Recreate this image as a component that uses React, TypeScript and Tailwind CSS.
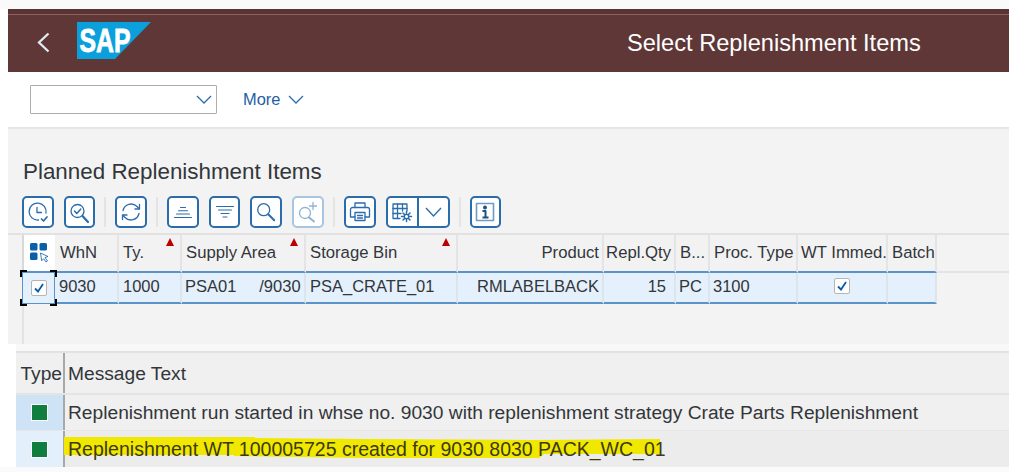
import React from "react";

const B = "#2b6cab";

function Svg({ children, size = 24, color = B }: { children: React.ReactNode; size?: number; color?: string }) {
  return (
    <svg width={size} height={size} viewBox="0 0 24 24" fill="none" stroke={color} strokeWidth={1.3} strokeLinecap="round" strokeLinejoin="round">
      {children}
    </svg>
  );
}

const ClockCheck = () => (
  <Svg>
    <path d="M20 13A8.5 8.5 0 1 0 12.5 20" />
    <path d="M11 7.5v5h4.5" />
    <path d="M15.5 19l2 2 3.5-4" strokeWidth={1.7} />
  </Svg>
);
const SearchCheck = () => (
  <Svg>
    <circle cx="9.5" cy="11" r="6.5" />
    <path d="M14.5 16l5.5 6" strokeWidth={2.2} />
    <path d="M6.5 11l2.3 2.5 4-4.5" strokeWidth={1.5} />
  </Svg>
);
const Refresh = () => (
  <Svg>
    <path d="M4 10.5A8.3 8.3 0 0 1 18 6.5L20 8.5" />
    <path d="M20.5 4.5V9H16" />
    <path d="M20 13.5A8.3 8.3 0 0 1 6 17.5L4 15.5" />
    <path d="M3.5 19.5V15H8" />
  </Svg>
);
const SortAsc = () => (
  <Svg>
    <path d="M9.5 7.5h5M7.5 10.8h9M5.5 14h13M3.5 17.5h17" strokeWidth={1.1} />
  </Svg>
);
const SortDesc = () => (
  <Svg>
    <path d="M3.5 6.5h17M5.5 10h13M8 13.5h8M10 17h4" strokeWidth={1.1} />
  </Svg>
);
const Search = () => (
  <Svg>
    <circle cx="9.7" cy="9.7" r="6" />
    <path d="M14.2 14.2l6 6" strokeWidth={2} />
  </Svg>
);
const SearchPlus = () => (
  <Svg color="#8fb3d4">
    <circle cx="9" cy="13" r="5.5" />
    <path d="M13 17.5l5 4" strokeWidth={2} />
    <path d="M17 2.5v7M13.5 6h7" />
  </Svg>
);
const Printer = () => (
  <Svg>
    <path d="M7 7.5V3h10v4.5" />
    <path d="M7 17H2.5V9.5a2 2 0 0 1 2-2h15a2 2 0 0 1 2 2V17H17" />
    <path d="M7 12.5h10V20.5H7z" />
    <path d="M9.5 15.5h5M9.5 18h5" />
  </Svg>
);
const TableGear = () => (
  <Svg>
    <path d="M10 18.5H3V4h14v7" />
    <path d="M3 8.5h14M3 13.5h8M7.5 4v14.5M12.5 4v7" />
    <circle cx="16.5" cy="16.5" r="2.2" />
    <path d="M16.5 11.5v2M16.5 19.5v2M11.5 16.5h2M19.5 16.5h2M13 13l1.4 1.4M18.6 18.6l1.4 1.4M13 20l1.4-1.4M18.6 14.4l1.4-1.4" strokeWidth={1.5} />
  </Svg>
);
const Info = () => (
  <Svg>
    <rect x="3.5" y="3.5" width="17" height="17" strokeWidth={1.6} stroke="#6d9cc9" />
    <circle cx="12" cy="7.5" r="1.3" fill="#1c4f83" stroke="#1c4f83" />
    <path d="M9.5 11H12.5V17M9.5 17.5h6" strokeWidth={2} strokeLinecap="butt" stroke="#1c4f83" />
  </Svg>
);

function Chevron({ w = 14, h = 7 }: { w?: number; h?: number }) {
  return (
    <svg width={w + 2} height={h + 2} viewBox={`0 0 ${w + 2} ${h + 2}`} fill="none" stroke="#2b6cab" strokeWidth="1.3">
      <path d={`M1 1L${w / 2 + 1} ${h + 1}L${w + 1} 1`} />
    </svg>
  );
}

function Btn({ children, disabled }: { children: React.ReactNode; disabled?: boolean }) {
  return (
    <div className={`flex h-[32px] w-[31.7px] shrink-0 items-center justify-center rounded-[5px] border-2 bg-white ${disabled ? "border-[#a9c5df]" : "border-[#2b6cab]"}`}>
      {children}
    </div>
  );
}
const Sep = () => <div className="mx-[9px] h-[30px] w-[2px] shrink-0 bg-[#e4e4e4]" />;

const Tri = () => (
  <div className="absolute right-[6px] top-[3px] h-0 w-0 border-x-[4.5px] border-b-[8px] border-x-transparent border-b-[#bb0000]" />
);

function Check() {
  return (
    <div className="flex h-[16px] w-[16px] items-center justify-center rounded-[2px] border border-[#b5b5b5] bg-white">
      <svg width="12" height="12" viewBox="0 0 12 12" fill="none" stroke="#0a5cab" strokeWidth="1.8">
        <path d="M2 6.5l3 3 5-7.5" />
      </svg>
    </div>
  );
}

type Col = {
  w: number;
  head: string;
  cell?: string;
  tri?: boolean;
  pre?: boolean;
  right?: boolean;
  check?: boolean;
  center?: boolean;
  headPad: string;
  cellPad: string;
};

const cols: Col[] = [
  { w: 64, head: "WhN", cell: "9030", headPad: "px-[5px]", cellPad: "px-[4px]" },
  { w: 63, head: "Ty.", cell: "1000", tri: true, headPad: "px-[4px]", cellPad: "px-[4px]" },
  { w: 124, head: "Supply Area", cell: "PSA01     /9030", tri: true, pre: true, headPad: "px-[4px]", cellPad: "px-[3px]" },
  { w: 152, head: "Storage Bin", cell: "PSA_CRATE_01", tri: true, headPad: "px-[4px]", cellPad: "px-[4px]" },
  { w: 146, head: "Product", cell: "RMLABELBACK", right: true, headPad: "px-[3px]", cellPad: "px-[3px]" },
  { w: 72, head: "Repl.Qty", cell: "15", right: true, headPad: "px-[3px]", cellPad: "pl-[3px] pr-[8px]" },
  { w: 34, head: "B...", cell: "PC", headPad: "px-[4px]", cellPad: "px-[3px]" },
  { w: 88, head: "Proc. Type", cell: "3100", headPad: "px-[4px]", cellPad: "px-[3px]" },
  { w: 90, head: "WT Immed.", check: true, center: true, headPad: "px-[3px]", cellPad: "px-[3px]" },
  { w: 49, head: "Batch", cell: "", headPad: "px-[4px]", cellPad: "px-[4px]" },
];

const Corner = ({ c }: { c: string }) => <div className={`absolute h-[7px] w-[7px] border-black ${c}`} />;

function Square() {
  return <div className="h-[17px] w-[17px] border border-white bg-[#107e3e]" />;
}

export default function App() {
  return (
    <div className="h-[472px] w-[1009px] overflow-hidden bg-[#fafafa] pt-[9px] text-[#32363a] [font-family:'Liberation_Sans',Arial,sans-serif]">
      <div className="bg-white">
        <header className="ml-[8px] flex h-[63px] items-center border-t-[5px] border-[#5a3433] bg-[#5f3736] shadow-[inset_0_1px_0_#8a5f5e]">
          <div className="ml-[29px] flex w-[40px] shrink-0 -translate-y-[1px]">
            <svg width="13" height="21" viewBox="0 0 13 21" fill="none" stroke="#dfeaf2" strokeWidth="2.3">
              <path d="M11.5 1.5L2 10.5L11.5 19.5" />
            </svg>
          </div>
          <svg width="74" height="37" viewBox="0 0 74 37" className="shrink-0 -translate-y-[3px]">
            <polygon points="0,0 74,0 38,37 0,37" fill="#0b9fdc" />
            <text x="2.5" y="29.5" fontFamily="Liberation Sans" fontWeight="700" fontSize="33" textLength="51" lengthAdjust="spacingAndGlyphs" stroke="#fff" strokeWidth="0.8" fill="#fff">SAP</text>
          </svg>
          <div className="ml-[476px] translate-y-[1px] whitespace-nowrap text-[23.6px] text-white">Select Replenishment Items</div>
        </header>

        <div className="ml-[8px] flex h-[57px] items-center border-b-2 border-[#e6e6e6] pl-[22px]">
          <div className="flex h-[29px] w-[187px] items-center justify-end rounded-[1px] border border-[#b2abab] bg-white pr-[4px]">
            <Chevron />
          </div>
          <div className="ml-[26px] flex items-center text-[16.4px] text-[#1e5fa3]">
            More
            <span className="ml-[8px] flex"><Chevron /></span>
          </div>
        </div>

        <section className="ml-[8px] flex h-[215px] flex-col bg-[#f3f3f3] pt-[28px]">
          <h1 className="ml-[15px] h-[39px] text-[22.4px] leading-[30px] text-[#32363a]">Planned Replenishment Items</h1>
          <div className="ml-[14px] flex items-center">
            <div className="flex gap-[10px]">
              <Btn><ClockCheck /></Btn>
              <Btn><SearchCheck /></Btn>
            </div>
            <Sep />
            <Btn><Refresh /></Btn>
            <Sep />
            <div className="flex gap-[10px]">
              <Btn><SortAsc /></Btn>
              <Btn><SortDesc /></Btn>
              <Btn><Search /></Btn>
              <Btn disabled><SearchPlus /></Btn>
            </div>
            <Sep />
            <Btn><Printer /></Btn>
            <div className="ml-[10px] flex h-[32px] w-[64px] rounded-[5px] border-2 border-[#2b6cab] bg-white">
              <div className="flex w-[31px] items-center justify-center border-r-2 border-[#2b6cab]"><TableGear /></div>
              <div className="flex flex-1 items-center justify-center"><Chevron w={15} h={8} /></div>
            </div>
            <Sep />
            <Btn><Info /></Btn>
          </div>

          <div className="mt-[5px] flex flex-1 flex-col border-t-2 border-[#e2e2e2] pl-[14px]">
            <div className="border-b-2 border-[#e4e4e4]">
              <div className="-mb-[2px] flex h-[38px] text-[16.7px]">
                <div className="flex w-[33px] shrink-0 items-center justify-center border-l-2 border-b-2 border-l-[#d8d8d8] border-b-[#5b93c9] bg-white">
                  <svg width="20" height="20" viewBox="0 0 20 20">
                    <rect x="0" y="0" width="7.5" height="7.5" rx="1.5" fill="#0a5fa8" />
                    <rect x="9.5" y="0" width="7.5" height="7.5" rx="1.5" fill="#0a5fa8" />
                    <rect x="0" y="9.5" width="7.5" height="7.5" rx="1.5" fill="#0a5fa8" />
                    <path d="M10.5 10l7.5 3.5-3 1 2.5 3.5-1.5 1-2.3-3.3-2 2z" fill="#fff" stroke="#0a5fa8" strokeWidth="0.8" />
                  </svg>
                </div>
                {cols.map((c) => (
                  <div
                    key={c.head}
                    style={{ width: c.w }}
                    className={`relative flex shrink-0 items-center overflow-hidden whitespace-nowrap border-r-2 border-b-2 border-r-[#e4e4e4] border-b-[#5b93c9] bg-[#f2f2f2] ${c.headPad} ${c.right ? "justify-end" : ""}`}
                  >
                    {c.head}
                    {c.tri && <Tri />}
                  </div>
                ))}
              </div>
            </div>
            <div className="-mt-[1px] flex h-[32px] text-[16.5px]">
              <div className="relative flex w-[33px] shrink-0 items-center justify-center border border-[#5b93c9] bg-[#e4f0fb]">
                <Check />
                <Corner c="-left-[3px] -top-[3px] border-l-2 border-t-2" />
                <Corner c="-right-[3px] -top-[3px] border-r-2 border-t-2" />
                <Corner c="-left-[3px] -bottom-[3px] border-l-2 border-b-2" />
                <Corner c="-right-[3px] -bottom-[3px] border-r-2 border-b-2" />
              </div>
              {cols.map((c) => (
                <div
                  key={c.head}
                  style={{ width: c.w }}
                  className={`flex shrink-0 items-center overflow-hidden border-r-2 border-b-2 border-r-[#dde5ec] border-b-[#5b93c9] bg-[#e4f0fb] pb-[2px] ${c.cellPad} ${c.pre ? "whitespace-pre" : "whitespace-nowrap"} ${c.right ? "justify-end" : ""} ${c.center ? "justify-center" : ""}`}
                >
                  {c.check ? <Check /> : c.cell}
                </div>
              ))}
            </div>
            <div className="flex-1 border-l-2 border-[#e4e4e4]" />
          </div>
        </section>

        <div className="h-[7px] bg-[linear-gradient(to_right,#fff_16px,#f8f8f8_16px)]" />

        <section className="ml-[16px] border-t-2 border-[#e2e2e2] bg-[#f0f0f0] text-[19.2px]">
          <div className="flex h-[42px] items-center border-b-2 border-[#e4e4e4]">
            <div className="flex h-full w-[49px] items-center justify-end border-r-2 border-[#a8a8a8] pr-[1px] pt-[2px]">Type</div>
            <div className="pl-[3px] pt-[2px]">Message Text</div>
          </div>
          <div className="flex h-[36px] items-center border-b border-[#e6e6e6]">
            <div className="flex h-full w-[49px] items-center justify-center border-r-2 border-[#a8a8a8] bg-[#cfe3f6]"><Square /></div>
            <div className="whitespace-nowrap pl-[3px] pt-[2px]">Replenishment run started in whse no. 9030 with replenishment strategy Crate Parts Replenishment</div>
          </div>
          <div className="relative flex h-[36px] items-center bg-[#ececec]">
            <div className="flex h-full w-[49px] items-center justify-center border-r-2 border-[#a8a8a8] bg-[#e3f0fc]"><Square /></div>
            <svg width="600" height="36" viewBox="0 0 600 36" className="absolute left-[48px] top-0">
              <polygon points="0,6 191,6 191,7 300,8 470,9 596,8 596,23 480,23 475,27 300,27 170,25 170,24 0,24" fill="#f0e800" />
            </svg>
            <div className="relative whitespace-nowrap pl-[3px] pt-[2px] text-[19.5px] text-[#3d3a10]">Replenishment WT 100005725 created for 9030 8030 PACK_WC_01</div>
          </div>
        </section>
      </div>
    </div>
  );
}
